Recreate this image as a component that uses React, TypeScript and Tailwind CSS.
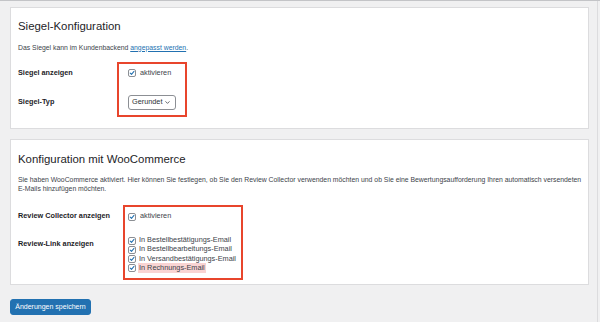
import { ChevronDown } from 'lucide-react'

function Check({ checked = true }: { checked?: boolean }) {
  return (
    <span className="w-[8px] h-[8px] shrink-0 rounded-[2px] border border-[#8c8f94] bg-white flex items-center justify-center">
      {checked && (
        <svg viewBox="0 0 10 10" className="w-[8px] h-[8px]">
          <path d="M2 5.2 L4.2 7.3 L8.3 2.4" fill="none" stroke="#2271b1" strokeWidth="1.7" strokeLinecap="round" strokeLinejoin="round" />
        </svg>
      )}
    </span>
  )
}

function Option({ label, mark }: { label: string; mark?: boolean }) {
  return (
    <label className="flex items-center gap-[3px] h-[9.3px]">
      <Check />
      <span className={mark ? 'bg-[#f9d4d3] px-[1px] -ml-[1px] leading-[10px]' : ''}>{label}</span>
    </label>
  )
}

export default function App() {
  const emails = [
    'In Bestellbestätigungs-Email',
    'In Bestellbearbeitungs-Email',
    'In Versandbestätigungs-Email',
  ]

  return (
    <div className="w-[600px] h-[322px] overflow-hidden bg-[#f0f0f1] border-t border-[#c3c4c7] text-[#3c434a] font-['Liberation_Sans',Arial,sans-serif]">
      <div className="w-[598px] h-full border-r border-[#dcdcde] pl-[10px] pr-[8px] pt-[6px]">
        {/* Siegel */}
        <section className="relative h-[122px] bg-white border border-[#dcdcde] pl-[7px] pr-[4px]">
          <h2 className="mt-[11px] text-[11.4px] leading-[14px] text-[#1d2327]">Siegel-Konfiguration</h2>
          <p className="mt-[9.5px] text-[6.85px] leading-[10px]">
            Das Siegel kann im Kundenbackend <a className="text-[#2271b1] underline">angepasst werden</a>.
          </p>
          <div className="mt-[6px] grid grid-cols-[110px_1fr] text-[7.3px]">
            <div className="h-[29px] flex items-center font-bold text-[#1d2327]">Siegel anzeigen</div>
            <div className="h-[29px] flex items-center">
              <label className="flex items-center gap-[4px]">
                <Check />
                <span>aktivieren</span>
              </label>
            </div>
            <div className="h-[29px] flex items-center font-bold text-[#1d2327]">Siegel-Typ</div>
            <div className="h-[29px] flex items-center">
              <div className="h-[15px] w-[48px] rounded-[3px] border border-[#8c8f94] bg-white flex items-center gap-[2px] pl-[3px] text-[#2c3338]">
                <span>Gerundet</span>
                <ChevronDown size={7} strokeWidth={2.5} />
              </div>
            </div>
          </div>
          <div className="absolute left-[106px] top-[54px] w-[70px] h-[55px] border-2 border-[#e8452c]" />
        </section>

        {/* WooCommerce */}
        <section className="relative mt-[10px] h-[146px] bg-white border border-[#dcdcde] pl-[7px] pr-[4px]">
          <h2 className="mt-[12px] text-[11.4px] leading-[14px] text-[#1d2327]">Konfiguration mit WooCommerce</h2>
          <p className="mt-[8.5px] text-[6.85px] leading-[9.7px]">
            Sie haben WooCommerce aktiviert. Hier können Sie festlegen, ob Sie den Review Collector verwenden möchten und ob Sie eine Bewertungsaufforderung Ihren automatisch versendeten E-Mails hinzufügen möchten.
          </p>
          <div className="mt-[12px] grid grid-cols-[110px_1fr] text-[7.3px]">
            <div className="h-[22px] flex items-center font-bold text-[#1d2327]">Review Collector anzeigen</div>
            <div className="h-[22px] flex items-center">
              <label className="flex items-center gap-[4px]">
                <Check />
                <span>aktivieren</span>
              </label>
            </div>
            <div className="mt-[8px] pt-[3.5px] font-bold text-[#1d2327] leading-[9.3px]">Review-Link anzeigen</div>
            <div className="mt-[8px] flex flex-col">
              {emails.map(e => (
                <Option key={e} label={e} />
              ))}
              <Option label="In Rechnungs-Email" mark />
            </div>
          </div>
          <div className="absolute left-[112px] top-[65px] w-[120px] h-[75px] border-2 border-[#e8452c]" />
        </section>

        <button className="mt-[14px] h-[16px] w-[81px] rounded-[3px] bg-[#2271b1] border border-[#2271b1] text-white text-[7px] flex items-center justify-center">
          Änderungen speichern
        </button>
      </div>
    </div>
  )
}
